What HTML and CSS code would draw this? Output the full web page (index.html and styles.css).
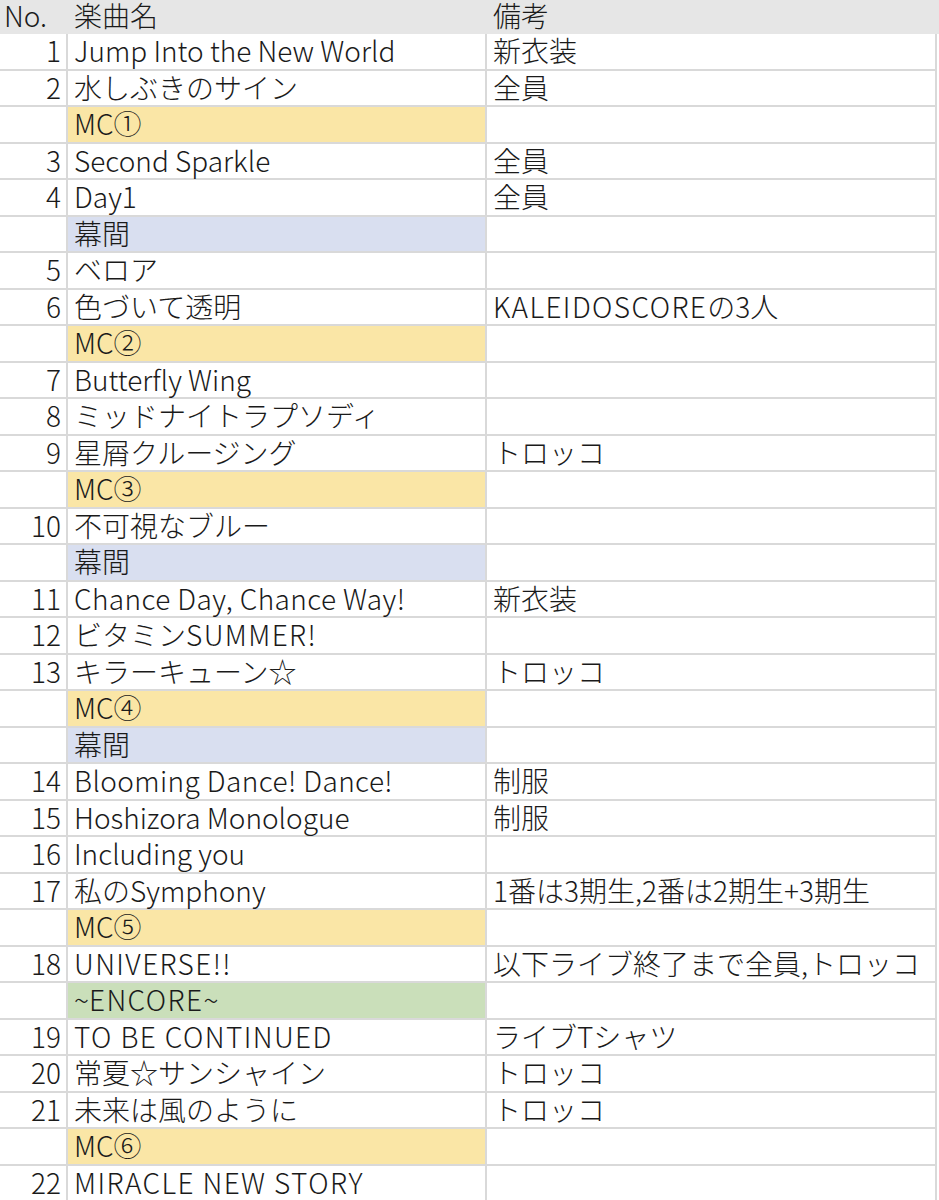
FILE: index.html
```html
<!DOCTYPE html>
<html lang="ja">
<head>
<meta charset="utf-8">
<title>セットリスト</title>
<link rel="stylesheet" href="styles.css">
</head>
<body>
<div class="sheet">
  <div class="row head"><div class="c no">No.</div><div class="c">楽曲名</div><div class="c">備考</div><div class="c end"></div></div>
  <div class="row"><div class="c num">1</div><div class="c">Jump Into the New World</div><div class="c">新衣装</div><div class="c end"></div></div>
  <div class="row"><div class="c num">2</div><div class="c">水しぶきのサイン</div><div class="c">全員</div><div class="c end"></div></div>
  <div class="row"><div class="c num"></div><div class="c mc">MC①</div><div class="c"></div><div class="c end"></div></div>
  <div class="row"><div class="c num">3</div><div class="c">Second Sparkle</div><div class="c">全員</div><div class="c end"></div></div>
  <div class="row"><div class="c num">4</div><div class="c">Day1</div><div class="c">全員</div><div class="c end"></div></div>
  <div class="row"><div class="c num"></div><div class="c break">幕間</div><div class="c"></div><div class="c end"></div></div>
  <div class="row"><div class="c num">5</div><div class="c">ベロア</div><div class="c"></div><div class="c end"></div></div>
  <div class="row"><div class="c num">6</div><div class="c">色づいて透明</div><div class="c"><span class="caps">KALEIDOSCORE</span>の3人</div><div class="c end"></div></div>
  <div class="row"><div class="c num"></div><div class="c mc">MC②</div><div class="c"></div><div class="c end"></div></div>
  <div class="row"><div class="c num">7</div><div class="c">Butterfly Wing</div><div class="c"></div><div class="c end"></div></div>
  <div class="row"><div class="c num">8</div><div class="c">ミッドナイトラプソディ</div><div class="c"></div><div class="c end"></div></div>
  <div class="row"><div class="c num">9</div><div class="c">星屑クルージング</div><div class="c">トロッコ</div><div class="c end"></div></div>
  <div class="row"><div class="c num"></div><div class="c mc">MC③</div><div class="c"></div><div class="c end"></div></div>
  <div class="row"><div class="c num">10</div><div class="c">不可視なブルー</div><div class="c"></div><div class="c end"></div></div>
  <div class="row"><div class="c num"></div><div class="c break">幕間</div><div class="c"></div><div class="c end"></div></div>
  <div class="row"><div class="c num">11</div><div class="c"><span class="mixed">Chance Day, Chance Way!</span></div><div class="c">新衣装</div><div class="c end"></div></div>
  <div class="row"><div class="c num">12</div><div class="c">ビタミン<span class="caps">SUMMER!</span></div><div class="c"></div><div class="c end"></div></div>
  <div class="row"><div class="c num">13</div><div class="c">キラーキューン☆</div><div class="c">トロッコ</div><div class="c end"></div></div>
  <div class="row"><div class="c num"></div><div class="c mc">MC④</div><div class="c"></div><div class="c end"></div></div>
  <div class="row"><div class="c num"></div><div class="c break">幕間</div><div class="c"></div><div class="c end"></div></div>
  <div class="row"><div class="c num">14</div><div class="c"><span class="mixed">Blooming Dance! Dance!</span></div><div class="c">制服</div><div class="c end"></div></div>
  <div class="row"><div class="c num">15</div><div class="c">Hoshizora Monologue</div><div class="c">制服</div><div class="c end"></div></div>
  <div class="row"><div class="c num">16</div><div class="c">Including you</div><div class="c"></div><div class="c end"></div></div>
  <div class="row"><div class="c num">17</div><div class="c">私のSymphony</div><div class="c">1番は3期生,2番は2期生+3期生</div><div class="c end"></div></div>
  <div class="row"><div class="c num"></div><div class="c mc">MC⑤</div><div class="c"></div><div class="c end"></div></div>
  <div class="row"><div class="c num">18</div><div class="c"><span class="caps">UNIVERSE!!</span></div><div class="c">以下ライブ終了まで全員,トロッコ</div><div class="c end"></div></div>
  <div class="row"><div class="c num"></div><div class="c encore">~<span class="caps">ENCORE</span>~</div><div class="c"></div><div class="c end"></div></div>
  <div class="row"><div class="c num">19</div><div class="c"><span class="caps">TO BE CONTINUED</span></div><div class="c">ライブTシャツ</div><div class="c end"></div></div>
  <div class="row"><div class="c num">20</div><div class="c">常夏☆サンシャイン</div><div class="c">トロッコ</div><div class="c end"></div></div>
  <div class="row"><div class="c num">21</div><div class="c">未来は風のように</div><div class="c">トロッコ</div><div class="c end"></div></div>
  <div class="row"><div class="c num"></div><div class="c mc">MC⑥</div><div class="c"></div><div class="c end"></div></div>
  <div class="row"><div class="c num">22</div><div class="c"><span class="caps">MIRACLE NEW STORY</span></div><div class="c"></div><div class="c end"></div></div>
</div>
</body>
</html>
```

FILE: styles.css
```css
html, body {
  margin: 0;
  padding: 0;
  background: #ffffff;
}
.sheet {
  width: 939px;
  font-family: "Noto Sans CJK JP", "Noto Sans", sans-serif;
  font-size: 28px;
  font-weight: 300;
  color: #1a1a1a;
}
.row {
  display: grid;
  grid-template-columns: 68px 419px 450px 1fr;
  height: 36.5px;
}
.c {
  box-sizing: border-box;
  border-right: 2px solid #d9d9d9;
  border-bottom: 2px solid #d9d9d9;
  padding: 0 6px;
  line-height: 33px;
  white-space: nowrap;
}
.c.end {
  border: none;
}
.num {
  text-align: right;
  padding-right: 5px;
}
.head {
  height: 34px;
  background: #e6e6e6;
}
.head .c {
  border: none;
  line-height: 30px;
}
.head .no {
  padding-left: 4px;
}
.caps {
  letter-spacing: 1.4px;
}
.mixed {
  letter-spacing: 0.4px;
}
.mc {
  background: #fae6a6;
}
.break {
  background: #d9dff0;
}
.encore {
  background: #cadfba;
}
```
